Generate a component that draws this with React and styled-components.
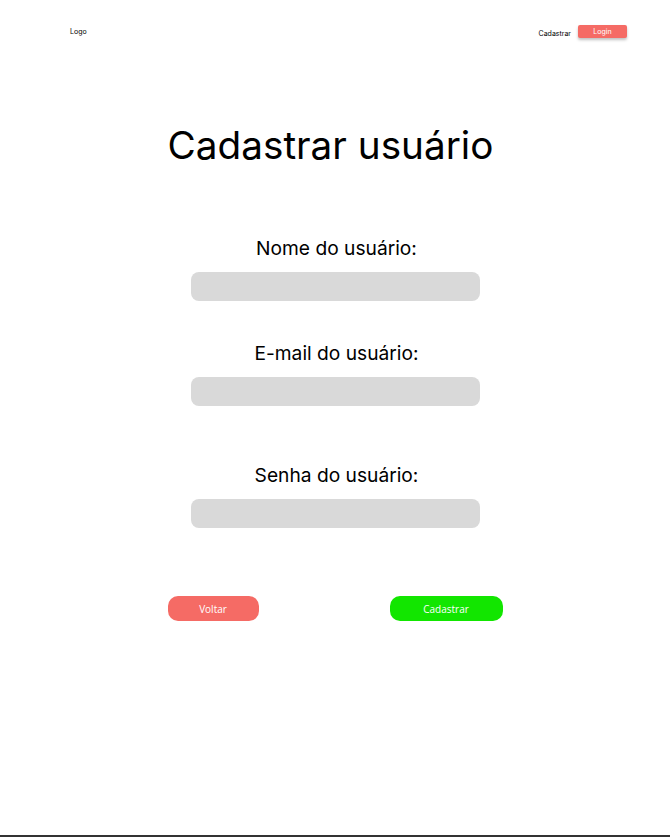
import React from "react";
import styled, { createGlobalStyle } from "styled-components";

const Global = createGlobalStyle`
  html, body { margin: 0; padding: 0; background: #ffffff; }
  body { font-family: Inter, "Liberation Sans", sans-serif; color: #000; }
  * { box-sizing: border-box; }
`;

const Page = styled.div`
  width: 670px;
  height: 837px;
  border-bottom: 2px solid #333333;
  display: flex;
  flex-direction: column;
`;

const Header = styled.header`
  display: flex;
  align-items: center;
  justify-content: space-between;
  height: 13px;
  margin-top: 25px;
  padding: 0 43px 0 70px;
`;

const Logo = styled.span`
  font-size: 7px;
  line-height: 13px;
  color: #000;
`;

const Nav = styled.nav`
  display: flex;
  align-items: center;
  gap: 7px;
`;

const NavLink = styled.span`
  font-size: 7px;
  line-height: 13px;
  color: #000;
  margin-top: 3px;
`;

const NavButton = styled.button`
  width: 49px;
  height: 13px;
  border: none;
  border-radius: 2px;
  background: #f56b65;
  color: #ffffff;
  font-family: Inter, sans-serif;
  font-size: 7px;
  line-height: 13px;
  padding: 0;
  box-shadow: 0 2px 3px rgba(0, 0, 0, 0.25);
`;

const Main = styled.main`
  display: flex;
  flex-direction: column;
  align-items: center;
`;

const Title = styled.h1`
  margin: 83px 0 0 -9px;
  font-size: 38.7px;
  line-height: 48px;
  font-weight: 400;
`;

const Field = styled.div`
  display: flex;
  flex-direction: column;
  align-items: center;
  margin-top: ${(p) => p.$top}px;
`;

const Label = styled.label`
  font-size: 19.2px;
  line-height: 24px;
  margin-left: 3px;
`;

const Input = styled.div`
  width: 289px;
  height: 29px;
  margin-top: 12px;
  border-radius: 8px;
  background: #d9d9d9;
`;

const Actions = styled.div`
  display: flex;
  justify-content: space-between;
  width: 335px;
  margin-top: 68px;
`;

const ActionButton = styled.button`
  width: ${(p) => p.$w}px;
  height: 25px;
  border: none;
  border-radius: 10px;
  background: ${(p) => p.$bg};
  color: #ffffff;
  font-family: "Open Sans", Inter, sans-serif;
  font-size: 10px;
  padding: 0;
`;

export default function App() {
  return (
    <>
      <Global />
      <Page>
        <Header>
          <Logo>Logo</Logo>
          <Nav>
            <NavLink>Cadastrar</NavLink>
            <NavButton>Login</NavButton>
          </Nav>
        </Header>
        <Main>
          <Title>Cadastrar usuário</Title>
          <Field $top={67}>
            <Label>Nome do usuário:</Label>
            <Input />
          </Field>
          <Field $top={40}>
            <Label>E-mail do usuário:</Label>
            <Input />
          </Field>
          <Field $top={57}>
            <Label>Senha do usuário:</Label>
            <Input />
          </Field>
          <Actions>
            <ActionButton $w={91} $bg="#f56b65">Voltar</ActionButton>
            <ActionButton $w={113} $bg="#12e600">Cadastrar</ActionButton>
          </Actions>
        </Main>
      </Page>
    </>
  );
}
